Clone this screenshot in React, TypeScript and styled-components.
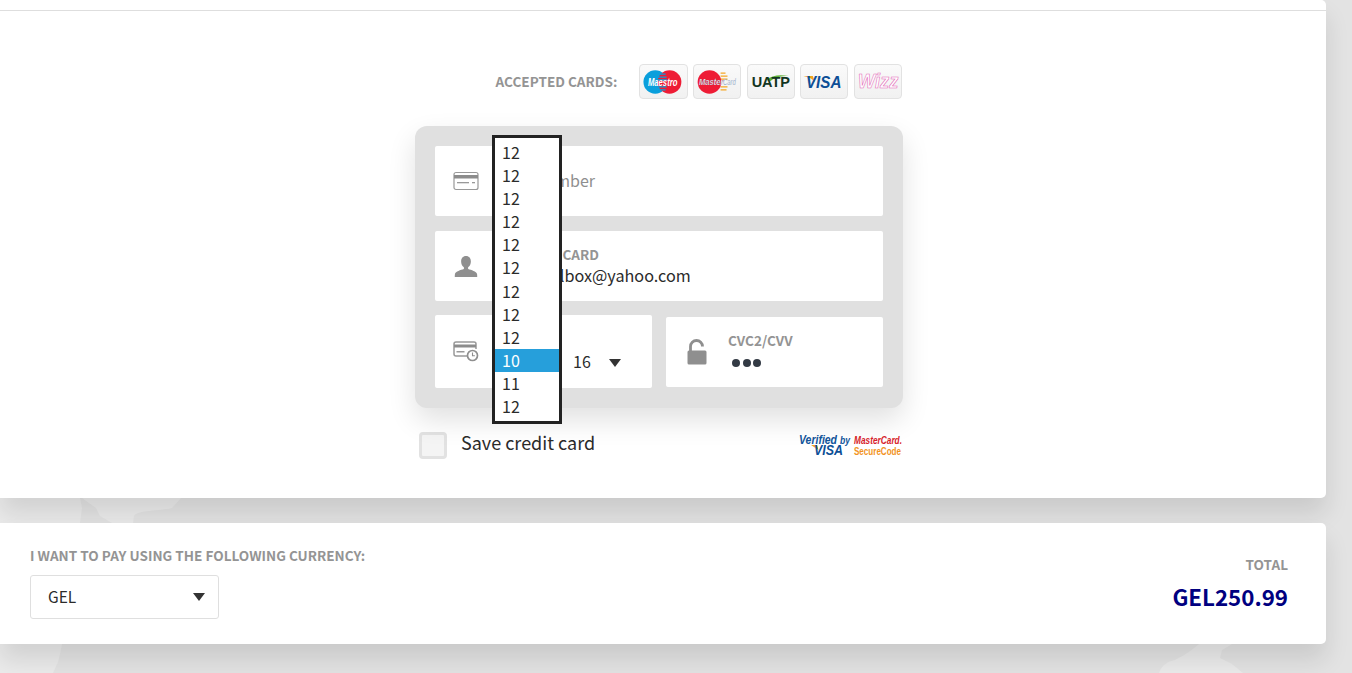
import React from 'react';
import styled, { createGlobalStyle } from 'styled-components';

const GlobalStyle = createGlobalStyle`
    html, body {
        margin: 0;
        height: 673px;
        overflow: hidden;
        background: #e3e3e3;
        font-family: "Noto Sans CJK SC", "Noto Sans", sans-serif;
        color: #2b2b2b;
    }
`;

const Page = styled.div`
    position: relative;
    width: 1326px;
    display: flex;
    flex-direction: column;
    gap: 25px;
`;

const MapBackdrop = styled.svg`
    position: absolute;
    left: 0;
    top: 0;
    width: 1352px;
    height: 673px;
`;

const Card = styled.section`
    position: relative;
    background: #fff;
    border-radius: 0 5px 5px 0;
    box-shadow: 0 16px 24px rgba(0, 0, 0, 0.11);
`;

const TopStrip = styled.div`
    height: 10px;
    border-bottom: 1px solid #dedede;
`;

const Checkout = styled.div`
    width: 488px;
    margin-left: 415px;
    height: 487px;
    padding-top: 53px;
    box-sizing: border-box;
`;

const AcceptedRow = styled.div`
    display: flex;
    align-items: center;
    justify-content: flex-end;
    margin-right: 1px;
`;

const SmallLabel = styled.div`
    font-size: 13.55px;
    line-height: 18px;
    font-weight: 700;
    color: #949494;
`;

const AcceptedLabel = styled(SmallLabel)`
    margin-right: 22px;
    padding-bottom: 2px;
`;

const Chips = styled.div`
    display: flex;
    gap: 5.3px;
`;

const Chip = styled.div`
    width: 48.3px;
    height: 35px;
    box-sizing: border-box;
    border: 1px solid #e2e2e2;
    border-radius: 4px;
    background: linear-gradient(#fafafa, #f1f1f1);
    svg {
        display: block;
        width: 100%;
        height: 100%;
    }
`;

const Panel = styled.div`
    position: relative;
    margin-top: 27px;
    height: 282px;
    box-sizing: border-box;
    padding: 20px;
    background: #e0e0e0;
    border-radius: 12px;
    box-shadow: 0 12px 28px rgba(0, 0, 0, 0.12);
    display: flex;
    flex-direction: column;
    gap: 15px;
`;

const Field = styled.div<{ $width?: number; $height?: number }>`
    width: ${(p) => (p.$width ? `${p.$width}px` : '100%')};
    height: ${(p) => p.$height || 70}px;
    flex-shrink: 0;
    box-sizing: border-box;
    background: #fff;
    border-radius: 2px;
    display: flex;
    align-items: center;
`;

const FieldIcon = styled.div`
    width: 62px;
    flex-shrink: 0;
    display: flex;
    justify-content: center;
    svg {
        display: block;
    }
`;

const FieldBody = styled.div<{ $lift?: number }>`
    display: flex;
    flex-direction: column;
    white-space: nowrap;
    padding-bottom: ${(p) => p.$lift || 0}px;
`;

const Placeholder = styled.div`
    font-size: 16px;
    padding-bottom: 2px;
    color: #8f8f8f;
`;

const FieldValue = styled.div`
    margin-top: 1px;
    font-size: 16.2px;
    line-height: 22px;
    color: #2b2b2b;
`;

const DateRow = styled.div`
    display: flex;
    justify-content: space-between;
    align-items: center;
    margin-top: -1px;
`;

const DateSelect = styled.div`
    display: flex;
    align-items: center;
    gap: 18px;
    margin: 19px 0 0 76px;
    font-size: 16px;
    line-height: 22px;
    color: #2b2b2b;
`;

const Arrow = styled.span<{ $width: number }>`
    width: 0;
    height: 0;
    border-left: ${(p) => p.$width / 2}px solid transparent;
    border-right: ${(p) => p.$width / 2}px solid transparent;
    border-top: 8px solid #333;
`;

const DateArrow = styled(Arrow)`
    margin-top: 4px;
`;

const Dots = styled.div`
    display: flex;
    gap: 2.5px;
    margin: 10px 0 0 4px;
    height: 8px;
`;

const Dot = styled.span`
    width: 8px;
    height: 8px;
    border-radius: 50%;
    background: #333a44;
`;

const Dropdown = styled.ul`
    position: absolute;
    left: 77px;
    top: 9px;
    width: 64px;
    margin: 0;
    padding: 2.8px 0 2.6px;
    list-style: none;
    background: #fff;
    border: 3px solid #222;
`;

const DropdownItem = styled.li<{ $active?: boolean }>`
    height: 23.13px;
    line-height: 23px;
    padding-left: 7px;
    font-size: 16px;
    color: ${(p) => (p.$active ? '#fff' : '#2b2b2b')};
    background: ${(p) => (p.$active ? '#269fdb' : 'transparent')};
`;

const SaveRow = styled.div`
    display: flex;
    align-items: center;
    justify-content: space-between;
    margin-top: 21.5px;
    padding-left: 4px;
`;

const SaveLabel = styled.label`
    display: flex;
    align-items: center;
    gap: 14px;
    font-size: 18px;
    line-height: 24px;
    color: #2b2b2b;
`;

const SaveText = styled.span`
    padding-bottom: 7px;
`;

const Checkbox = styled.span`
    width: 28px;
    height: 27px;
    box-sizing: border-box;
    border: 3px solid #e2e2e2;
    border-radius: 4px;
    background: #f4f4f4;
`;

const SecureMarks = styled.svg`
    display: block;
    margin-right: -6px;
`;

const Footer = styled.div`
    height: 121px;
    box-sizing: border-box;
    padding: 23px 38px 0 30px;
    display: flex;
    justify-content: space-between;
`;

const CurrencySelect = styled.div`
    margin-top: 11px;
    width: 189px;
    height: 44px;
    box-sizing: border-box;
    padding: 0 13px 0 17px;
    border: 1px solid #dfdfdf;
    border-radius: 3px;
    display: flex;
    align-items: center;
    justify-content: space-between;
    font-size: 15.5px;
    color: #2b2b2b;
`;

const CurrencyCode = styled.span`
    padding-bottom: 2px;
`;

const TotalBox = styled.div`
    padding-top: 9px;
    text-align: right;
`;

const TotalAmount = styled.div`
    margin-top: 8px;
    font-size: 22.3px;
    line-height: 30px;
    font-weight: 700;
    color: #000080;
`;

const months = ['12', '12', '12', '12', '12', '12', '12', '12', '12', '10', '11', '12'];

const logoFont = '"Liberation Sans", sans-serif';

const MaestroLogo = () => (
    <svg viewBox="0 0 47 33">
        <circle cx="15.5" cy="17" r="12" fill="#0a9fdc" />
        <circle cx="30" cy="17" r="12" fill="#ee1c35" />
        <path d="M19 9h7M18 12h9M17.5 15h10" stroke="#0a9fdc" strokeWidth="1.4" />
        <path d="M18 22h9M19 25h7" stroke="#0a9fdc" strokeWidth="1.4" />
        <text x="8" y="20.8" fontFamily={logoFont} fontSize="10.5" fontWeight="700" fontStyle="italic" fill="#fff" textLength="30" lengthAdjust="spacingAndGlyphs">Maestro</text>
    </svg>
);

const MastercardLogo = () => (
    <svg viewBox="0 0 47 33">
        <path d="M27 8h5M27 11h7M27 14h7M27 22h7M27 25h6" stroke="#f5a623" strokeWidth="1.2" />
        <circle cx="15.7" cy="17" r="12" fill="#ee1c35" />
        <text x="5" y="20.5" fontFamily={logoFont} fontSize="9.5" fontWeight="700" fontStyle="italic" fill="#fff" stroke="#5a3060" strokeWidth="0.25" textLength="25" lengthAdjust="spacingAndGlyphs">Master</text>
        <text x="29.5" y="20.5" fontFamily={logoFont} fontSize="8.5" fontStyle="italic" fill="#9fb0cc" textLength="13" lengthAdjust="spacingAndGlyphs">Card</text>
    </svg>
);

const UatpLogo = () => (
    <svg viewBox="0 0 47 33">
        <path d="M18 15c6-5 15-6 23-4-7 0-13 1-18 5z" fill="#5fb13a" />
        <text x="3.7" y="22.5" fontFamily={logoFont} fontSize="15" fontWeight="700" fill="#12351f" textLength="39" lengthAdjust="spacingAndGlyphs">UATP</text>
    </svg>
);

const VisaLogo = () => (
    <svg viewBox="0 0 47 33">
        <path d="M2.5 11h9.5l2 6c-2-3-6-5-11.5-6z" fill="#f2a51f" />
        <text x="5" y="23" fontFamily={logoFont} fontSize="16" fontWeight="700" fontStyle="italic" fill="#0d4f96" textLength="36" lengthAdjust="spacingAndGlyphs">VISA</text>
    </svg>
);

const WizzLogo = () => (
    <svg viewBox="0 0 47 33">
        <text x="3" y="23" fontFamily={logoFont} fontSize="20" fontWeight="700" fontStyle="italic" fill="#fff" stroke="#e46ab8" strokeWidth="0.6" textLength="41" lengthAdjust="spacingAndGlyphs">Wizz</text>
    </svg>
);

const SecureLogos = () => (
    <SecureMarks width="110" height="30" viewBox="0 0 110 30">
        <text x="0" y="13.5" fontFamily={logoFont} fontSize="13" fontWeight="700" fontStyle="italic" fill="#12559b" textLength="38" lengthAdjust="spacingAndGlyphs">Verified</text>
        <text x="41" y="13.5" fontFamily={logoFont} fontSize="10" fontWeight="700" fontStyle="italic" fill="#12559b" textLength="10" lengthAdjust="spacingAndGlyphs">by</text>
        <path d="M12 15h6l1.5 5z" fill="#f2a51f" />
        <text x="15" y="25" fontFamily={logoFont} fontSize="14.5" fontWeight="700" fontStyle="italic" fill="#0d4f96" textLength="29" lengthAdjust="spacingAndGlyphs">VISA</text>
        <text x="55" y="13.5" fontFamily={logoFont} fontSize="11" fontWeight="700" fontStyle="italic" fill="#d81e2c" textLength="48" lengthAdjust="spacingAndGlyphs">MasterCard.</text>
        <text x="55" y="24.5" fontFamily={logoFont} fontSize="11" fontWeight="700" fill="#f2931e" textLength="47" lengthAdjust="spacingAndGlyphs">SecureCode</text>
    </SecureMarks>
);

const CardIcon = () => (
    <svg width="26" height="20" viewBox="0 0 26 20">
        <rect x="1" y="1.5" width="24" height="17" rx="2" fill="none" stroke="#999" strokeWidth="1.2" />
        <rect x="1" y="4" width="24" height="3.5" fill="#8c8c8c" />
        <rect x="4" y="11" width="12" height="1.3" fill="#999" />
        <rect x="19" y="11" width="3" height="1.3" fill="#999" />
    </svg>
);

const PersonIcon = () => (
    <svg width="24" height="23" viewBox="0 0 26 25">
        <path d="M13 1c3.5 0 5.3 2.6 5.3 6 0 2.8-1.2 5.2-3 6.4v1.8c3.5 1.2 9 2.5 9.7 5.4.2 1 .2 2.4.2 3.4H.8c0-1 0-2.4.2-3.4.7-2.9 6.2-4.2 9.7-5.4v-1.8c-1.8-1.2-3-3.6-3-6.4 0-3.4 1.8-6 5.3-6z" fill="#8f8f8f" />
    </svg>
);

const DateIcon = () => (
    <svg width="26" height="21" viewBox="0 0 26 21">
        <path d="M14 15H3a2 2 0 0 1-2-2V3a2 2 0 0 1 2-2h18a2 2 0 0 1 2 2v5" fill="none" stroke="#999" strokeWidth="1.5" />
        <rect x="1" y="3.5" width="22" height="3" fill="#8c8c8c" />
        <rect x="3.5" y="10" width="8" height="1.5" fill="#999" />
        <circle cx="19.5" cy="14.5" r="5" fill="#fff" stroke="#8f8f8f" strokeWidth="1.7" />
        <path d="M19.5 11.5v3.2h2.4" fill="none" stroke="#8f8f8f" strokeWidth="1.1" />
    </svg>
);

const LockIcon = () => (
    <svg width="20" height="26" viewBox="0 0 20 26">
        <path d="M3.5 12V7.5a6 6 0 0 1 12 0" fill="none" stroke="#8f8f8f" strokeWidth="2.8" />
        <rect x="0.5" y="11.5" width="19" height="14" rx="1.5" fill="#8f8f8f" />
    </svg>
);

const App = () => {
    return (
        <>
            <GlobalStyle />
            <MapBackdrop viewBox="0 0 1352 673">
                <path d="M0 498H80L82 508 80 523H0z" fill="#ebebeb" />
                <path d="M82 498H181L172 508C160 511 137 510 134 516L133 523H112L100 516 96 508z" fill="#ebebeb" />
                <path d="M0 644H62L60 654 58 662 53 673H0z" fill="#ebebeb" />
                <path d="M1159 673C1162 664 1168 662 1175 660 1185 655 1192 650 1199 644H1232L1222 650 1220 658 1232 664 1243 673z" fill="#ebebeb" />
            </MapBackdrop>
            <Page>
                <Card>
                    <TopStrip />
                    <Checkout>
                        <AcceptedRow>
                            <AcceptedLabel>ACCEPTED CARDS:</AcceptedLabel>
                            <Chips>
                                <Chip><MaestroLogo /></Chip>
                                <Chip><MastercardLogo /></Chip>
                                <Chip><UatpLogo /></Chip>
                                <Chip><VisaLogo /></Chip>
                                <Chip><WizzLogo /></Chip>
                            </Chips>
                        </AcceptedRow>
                        <Panel>
                            <Field>
                                <FieldIcon><CardIcon /></FieldIcon>
                                <Placeholder>Card number</Placeholder>
                            </Field>
                            <Field>
                                <FieldIcon><PersonIcon /></FieldIcon>
                                <FieldBody $lift={1}>
                                    <SmallLabel>NAME ON CARD</SmallLabel>
                                    <FieldValue>yourmailbox@yahoo.com</FieldValue>
                                </FieldBody>
                            </Field>
                            <DateRow>
                                <Field $width={217} $height={73}>
                                    <FieldIcon><DateIcon /></FieldIcon>
                                    <DateSelect>16<DateArrow $width={13} /></DateSelect>
                                </Field>
                                <Field $width={217}>
                                    <FieldIcon><LockIcon /></FieldIcon>
                                    <FieldBody $lift={6}>
                                        <SmallLabel>CVC2/CVV</SmallLabel>
                                        <Dots><Dot /><Dot /><Dot /></Dots>
                                    </FieldBody>
                                </Field>
                            </DateRow>
                            <Dropdown>
                                {months.map((month, i) => (
                                    <DropdownItem key={i} $active={i === 9}>{month}</DropdownItem>
                                ))}
                            </Dropdown>
                        </Panel>
                        <SaveRow>
                            <SaveLabel><Checkbox /><SaveText>Save credit card</SaveText></SaveLabel>
                            <SecureLogos />
                        </SaveRow>
                    </Checkout>
                </Card>
                <Card>
                    <Footer>
                        <div>
                            <SmallLabel>I WANT TO PAY USING THE FOLLOWING CURRENCY:</SmallLabel>
                            <CurrencySelect><CurrencyCode>GEL</CurrencyCode><Arrow $width={12} /></CurrencySelect>
                        </div>
                        <TotalBox>
                            <SmallLabel>TOTAL</SmallLabel>
                            <TotalAmount>GEL250.99</TotalAmount>
                        </TotalBox>
                    </Footer>
                </Card>
            </Page>
        </>
    );
};

export default App;
